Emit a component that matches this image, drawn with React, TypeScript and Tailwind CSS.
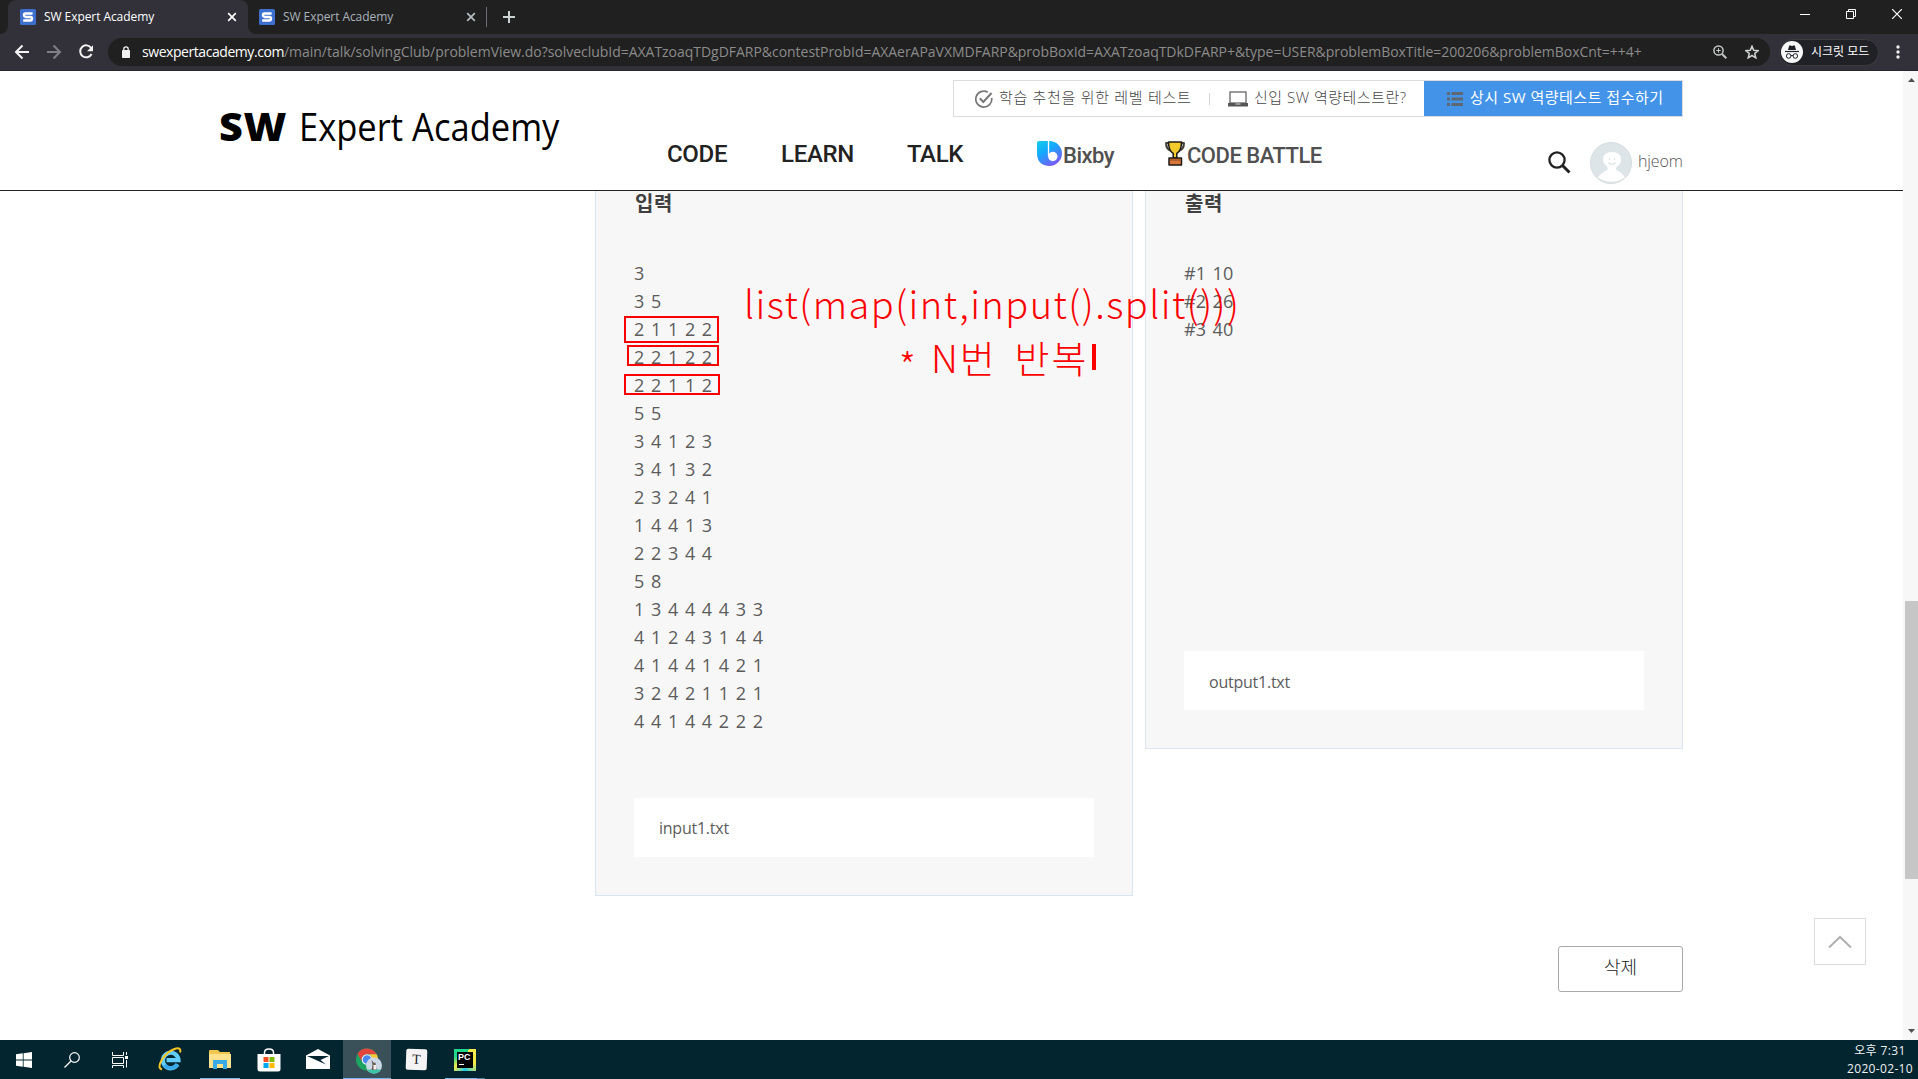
import type { ReactNode } from "react";

const UI = "font-['Open_Sans','Noto_Sans_CJK_KR',sans-serif]";

const inputLines = [
  "3", "3 5", "2 1 1 2 2", "2 2 1 2 2", "2 2 1 1 2", "5 5", "3 4 1 2 3", "3 4 1 3 2", "2 3 2 4 1",
  "1 4 4 1 3", "2 2 3 4 4", "5 8", "1 3 4 4 4 4 3 3", "4 1 2 4 3 1 4 4", "4 1 4 4 1 4 2 1",
  "3 2 4 2 1 1 2 1", "4 4 1 4 4 2 2 2",
];
const outputLines = ["#1 10", "#2 26", "#3 40"];

function Favicon() {
  return (
    <svg width="16" height="16" viewBox="0 0 16 16" className="shrink-0">
      <rect width="16" height="16" rx="1.5" fill="#3d6fcf" />
      <path d="M12.6 4.4H5.4Q4 4.4 4 6T5.4 7.9H10.6Q12 7.9 12 9.6T10.6 11.6H3.2" fill="none" stroke="#fff" strokeWidth="2.5" />
    </svg>
  );
}

function CloseX({ color }: { color: string }) {
  return (
    <svg width="10" height="10" viewBox="0 0 10 10" className="shrink-0">
      <path d="M1.2 1.2 8.8 8.8M8.8 1.2 1.2 8.8" stroke={color} strokeWidth="1.7" fill="none" />
    </svg>
  );
}

function TabStrip() {
  return (
    <div className="flex h-[34px] shrink-0 bg-[#202020]">
      <div className="flex w-2 items-end bg-[#323139]">
        <div className="h-full w-full rounded-br-lg bg-[#202020]" />
      </div>
      <div className="flex w-[240px] bg-[#202020]">
        <div className="flex w-full items-center rounded-t-lg bg-[#323139] pl-3 pr-[11px]">
          <Favicon />
          <span className="ml-2 grow whitespace-nowrap text-[12px] tracking-[-0.07px] text-white">SW Expert Academy</span>
          <CloseX color="#ffffff" />
        </div>
      </div>
      <div className="flex grow bg-[#323139]">
        <div className="flex grow items-center rounded-bl-lg bg-[#202020] pl-[11px]">
          <Favicon />
          <span className="ml-2 w-[183px] shrink-0 whitespace-nowrap text-[12px] tracking-[-0.07px] text-[#a9b3bb]">SW Expert Academy</span>
          <CloseX color="#b5bcc0" />
          <div className="ml-[10px] h-5 w-px shrink-0 bg-[#6c6d72]" />
          <svg width="12" height="12" viewBox="0 0 12 12" className="ml-[16px] shrink-0">
            <path d="M6 0V12M0 6H12" stroke="#ccd3d3" strokeWidth="2" />
          </svg>
          <div className="grow" />
          <div className="mb-[6px] flex items-center gap-9 pr-4">
            <svg width="10" height="10"><path d="M0 5.5H10" stroke="#fff" /></svg>
            <svg width="10" height="10" fill="none" stroke="#fff"><path d="M.5 2.5H7.5V9.5H.5ZM2.5 2.5V.5H9.5V7.5H7.5" /></svg>
            <svg width="10" height="10"><path d="M0 0 10 10M10 0 0 10" stroke="#fff" strokeWidth="1.2" /></svg>
          </div>
        </div>
      </div>
    </div>
  );
}

function Toolbar() {
  return (
    <div className="flex h-[37px] shrink-0 items-center border-b border-[#28272c] bg-[#323139] pr-[18px]">
      <svg width="108" height="28" viewBox="0 0 108 28" fill="none" strokeWidth="2" className="shrink-0">
        <path d="M29 14H16.5M22.5 7.5 16 14 22.5 20.5" stroke="#f4f4f4" />
        <path d="M47 14H59.5M53.5 7.5 60 14 53.5 20.5" stroke="#807f85" />
        <path d="M91.2 10A6 6 0 1 0 91.6 16" stroke="#f4f4f4" />
        <path d="M93 7.3V13.3H87Z" fill="#f4f4f4" />
      </svg>
      <div className="flex h-7 w-[1662px] shrink-0 items-center rounded-full bg-[#202020] pl-[14px] pr-[11px]">
        <svg width="8" height="12" viewBox="0 0 8 12" className="shrink-0">
          <rect y="4" width="8" height="8" rx=".8" fill="#f1f1f1" />
          <path d="M1.8 5V3A2.2 2.2 0 0 1 6.2 3V5" fill="none" stroke="#f1f1f1" strokeWidth="1.3" />
        </svg>
        <span className="mb-[2px] ml-3 w-[142px] shrink-0 whitespace-nowrap text-[14px] tracking-[-0.44px] text-white">swexpertacademy.com</span>
        <span className="mb-[2px] whitespace-nowrap text-[14px] tracking-[-0.03px] text-[#8b8b8b]">
          /main/talk/solvingClub/problemView.do?solveclubId=AXATzoaqTDgDFARP&amp;contestProbId=AXAerAPaVXMDFARP&amp;probBoxId=AXATzoaqTDkDFARP+&amp;type=USER&amp;problemBoxTitle=200206&amp;problemBoxCnt=++4+
        </span>
        <div className="grow" />
        <svg width="14" height="14" viewBox="0 0 14 14" fill="none" stroke="#c3c6c6" className="shrink-0">
          <circle cx="5.5" cy="5.5" r="4.6" strokeWidth="1.5" />
          <path d="M9 9 13.3 13.3" strokeWidth="2" />
          <path d="M5.5 3.3V7.7M3.3 5.5H7.7" strokeWidth="1.1" />
        </svg>
        <svg width="14" height="14" viewBox="0 0 24 24" fill="none" stroke="#cfd2d2" strokeWidth="2.6" className="ml-[18px] shrink-0">
          <path d="M12 2 14.9 9.1 22.5 9.7 16.7 14.6 18.5 22 12 18 5.5 22 7.3 14.6 1.5 9.7 9.1 9.1Z" />
        </svg>
      </div>
      <div className="ml-[9px] flex h-[27px] w-[100px] shrink-0 items-center rounded-full border border-[#3c3c41] bg-[#202027] pl-[1px]">
        <svg width="22" height="22" viewBox="0 0 22 22" className="shrink-0">
          <circle cx="11" cy="11" r="11" fill="#f7f8f8" />
          <path d="M7 9 8.2 4.5H9.4Q11 5.3 12.6 4.5H13.8L15 9Z" fill="#202027" />
          <path d="M4 10.5H18" stroke="#202027" strokeWidth="1.2" />
          <g fill="none" stroke="#202027"><circle cx="7.7" cy="15" r="2.3" /><circle cx="14.3" cy="15" r="2.3" /><path d="M10 14.7Q11 14 12 14.7" /></g>
        </svg>
        <span className="ml-[8px] whitespace-nowrap text-[12px] leading-none text-white">시크릿 모드</span>
      </div>
      <svg width="4" height="14" viewBox="0 0 4 14" fill="#eee" className="ml-[17px] shrink-0">
        <circle cx="2" cy="2" r="1.7" /><circle cx="2" cy="7" r="1.7" /><circle cx="2" cy="12" r="1.7" />
      </svg>
    </div>
  );
}

function Bixby() {
  return (
    <svg width="25" height="25" viewBox="0 0 25 25" className="mt-px shrink-0">
      <defs>
        <linearGradient id="bx" x1="0" y1="0" x2=".6" y2="1">
          <stop offset="0" stopColor="#14cfe6" /><stop offset=".45" stopColor="#12a8ff" /><stop offset="1" stopColor="#7a5cf5" />
        </linearGradient>
      </defs>
      <path d="M2 0H12.5A12.3 12.3 0 0 1 12.5 25Q0 24.5 0 12V2Q0 0 2 0Z" fill="url(#bx)" />
      <path d="M11.5 0V15" stroke="#fff" strokeWidth="1.3" />
      <circle cx="15.8" cy="15.5" r="4.7" fill="#fff" />
    </svg>
  );
}

function Trophy() {
  return (
    <svg width="20" height="25" viewBox="0 0 20 25" className="mt-px shrink-0" stroke="#1e1a16" strokeWidth="1.5" strokeLinejoin="round">
      <path d="M4.5 2H1.2Q.8 8.2 6.5 10M15.5 2H18.8Q19.2 8.2 13.5 10" fill="none" stroke="#45403a" strokeWidth="2.2" />
      <path d="M3.5 1H16.5Q16.5 9.5 11.8 12.5V17H8.2V12.5Q3.5 9.5 3.5 1Z" fill="#f4cb2c" />
      <rect x="4" y="17" width="12.5" height="7" fill="#d9773a" />
      <path d="M5 19H15.5" stroke="#8c4a22" strokeWidth="1" />
    </svg>
  );
}

function SiteHeader() {
  return (
    <header className="flex h-[120px] w-[1903px] shrink-0 border-b border-[#222] bg-white pl-[219px]">
      <div className="mt-[28px] flex h-[54px] w-[448px] shrink-0 items-start text-black">
        <span className="w-[80px] origin-left scale-x-[1.06] whitespace-nowrap text-[39px] font-extrabold leading-[54px] tracking-[0.5px]">SW</span>
        <span className="w-[300px] origin-left scale-x-[0.885] whitespace-nowrap text-[39px] leading-[54px]">Expert Academy</span>
      </div>
      <div className="flex w-[1016px] shrink-0 flex-col">
        <div className="ml-[286px] mt-[9px] flex h-[37px] w-[730px] shrink-0 items-center border border-[#dcdcdc] text-[15px] font-light text-[#444]">
          <svg width="18" height="18" viewBox="0 0 18 18" fill="none" stroke="#777" className="ml-[21px] shrink-0">
            <path d="M12.8 2.2A8 8 0 1 0 16.7 8" strokeWidth="1.7" />
            <path d="M4.8 8.3 8.3 12 16.5 3" strokeWidth="2" />
          </svg>
          <span className="mb-[2px] ml-[6px] w-[210px] shrink-0 whitespace-nowrap tracking-[0.7px]">학습 추천을 위한 레벨 테스트</span>
          <div className="h-3 w-px shrink-0 bg-[#d4d4d4]" />
          <svg width="20" height="16" viewBox="0 0 20 16" className="ml-[18px] shrink-0">
            <rect x="2" y="1" width="16" height="11" fill="none" stroke="#666" strokeWidth="1.3" />
            <path d="M0 12H20V15.5H0Z" fill="#555" /><path d="M7.5 12.5H12.5V13.5H7.5Z" fill="#ddd" />
          </svg>
          <span className="mb-[2px] ml-[6px] w-[170px] shrink-0 whitespace-nowrap tracking-[0.5px]">신입 SW 역량테스트란?</span>
          <div className="flex h-[35px] grow items-center bg-[#4394e8] font-normal text-white">
            <svg width="16" height="14" viewBox="0 0 16 14" fill="#5f6872" className="ml-[23px] shrink-0">
              <path d="M0 0H3V3H0ZM4.5 0H16V3H4.5ZM0 5.5H3V8.5H0ZM4.5 5.5H16V8.5H4.5ZM0 11H3V14H0ZM4.5 11H16V14H4.5Z" />
            </svg>
            <span className="mb-[2px] ml-[7px] whitespace-nowrap tracking-[0.5px]">상시 SW 역량테스트 접수하기</span>
          </div>
        </div>
        <div className="mt-[23px] flex h-[44px] w-[1016px] items-start font-['Roboto',sans-serif] text-[24px] font-medium leading-[28px] text-[#222]">
          <span className="w-[114px] shrink-0 tracking-[-0.3px]">CODE</span>
          <span className="w-[126px] shrink-0 tracking-[-0.3px]">LEARN</span>
          <span className="w-[130px] shrink-0 tracking-[-0.4px]">TALK</span>
          <Bixby />
          <span className="ml-[1px] mt-[2px] w-[102px] shrink-0 text-[22px] tracking-[-0.5px] text-[#505050]">Bixby</span>
          <Trophy />
          <span className="ml-[2px] mt-[2px] w-[361px] shrink-0 whitespace-nowrap text-[22px] tracking-[-0.5px] text-[#505050]">CODE BATTLE</span>
          <svg width="23" height="23" viewBox="0 0 23 23" fill="none" stroke="#222" className="mt-[11px] shrink-0">
            <circle cx="9" cy="9" r="7.6" strokeWidth="2.3" /><path d="M14.5 14.5 21.5 21.5" strokeWidth="3" />
          </svg>
          <svg width="42" height="42" viewBox="0 0 42 42" className="ml-[19px] mt-[2px] shrink-0">
            <circle cx="21" cy="21" r="20.5" fill="#dde5e8" stroke="#d5dde0" />
            <path d="M7.5 35.5Q13 29.5 17.5 28V25Q13 21.5 13 17.5 13 10 22 10 31 10 31 17.5 31 22 26 25.5V28Q31 29.5 35 35.5 22 44 7.5 35.5Z" fill="#fff" />
            <path d="M18.5 20.5Q22 24 25.5 20.5M19.5 16V18M24.5 16V18" fill="none" stroke="#dde5e8" strokeWidth="1.2" />
          </svg>
          <span className="ml-[6px] mt-[7px] font-['Open_Sans'] text-[16px] font-light tracking-[-0.1px] text-[#555]">hjeom</span>
        </div>
      </div>
    </header>
  );
}

function Panel({ title, lines, file, className, filePad, children }: { title: string; lines: string[]; file: string; className: string; filePad: string; children?: ReactNode }) {
  return (
    <section className={"relative flex w-[538px] shrink-0 flex-col border border-t-0 border-[#dbe4f0] bg-[#f7f7f7] pb-[38px] pl-[38px] pt-px " + className}>
      <h2 className="whitespace-nowrap pl-px text-[20px] font-bold leading-[24px] tracking-[0.5px] text-[#404040]">{title}</h2>
      <div className="mt-[43px] grow text-[18px] leading-[28px] text-[#5c5c5c] [word-spacing:2px]">
        {lines.map((l, i) => (
          <p key={i} className="whitespace-nowrap">{l}</p>
        ))}
      </div>
      <div className={"flex h-[59px] w-[460px] items-center bg-white pl-[25px] text-[16px] tracking-[-0.24px] text-[#5c5c5c] " + filePad}>{file}</div>
      {children}
    </section>
  );
}

function Taskbar() {
  return (
    <footer className="flex h-[39px] shrink-0 items-stretch bg-[#03252f]">
      <div className="flex w-[48px] items-center justify-center">
        <svg width="16" height="16" viewBox="0 0 16 16" fill="#fff"><path d="M0 2.2 6.8 1.3V7.6H0ZM7.6 1.2 16 0V7.6H7.6ZM0 8.4H6.8V14.7L0 13.8ZM7.6 8.4H16V16L7.6 14.8Z" /></svg>
      </div>
      <div className="flex w-[48px] items-center justify-center">
        <svg width="16" height="16" viewBox="0 0 16 16" fill="none" stroke="#fff" strokeWidth="1.2"><circle cx="10.5" cy="5.5" r="4.8" /><path d="M7 9 .5 15.5" /></svg>
      </div>
      <div className="flex w-[48px] items-center justify-center">
        <svg width="16" height="16" viewBox="0 0 16 16" fill="none" stroke="#fff"><path d="M.5 0V3.5H11.5V0M.5 5.5H11.5V11.5H.5ZM.5 16V13.5H11.5V16M14.5 0V3M14.5 8V15.5" /><path d="M13 4H16V7H13Z" fill="#fff" stroke="none" /></svg>
      </div>
      <div className="flex w-[52px] items-center justify-center">
        <svg width="24" height="24" viewBox="0 0 24 24" fill="none" className="mb-px">
          <path d="M19.5 17.3A7.8 7.8 0 1 1 20.5 13.2H8.5" stroke="#62cdfa" strokeWidth="4.2" />
          <path d="M19.5 17.5A8 8 0 0 1 6.5 18" stroke="#38a9ea" strokeWidth="3.5" />
          <path d="M4 22.5Q-1 21 4 12.5 10 3.5 18 1.5 23.5.5 22 5.5" stroke="#f5c526" strokeWidth="2" />
        </svg>
      </div>
      <div className="flex w-[48px] flex-col items-center justify-between pt-[10px]">
        <svg width="22" height="19" viewBox="0 0 22 19">
          <path d="M0 1Q0 0 1 0H9L11 2H21V18H0Z" fill="#f0c64e" /><path d="M0 4H22V18H0Z" fill="#fde18d" />
          <path d="M4 10H18V19H14V14H8V19H4Z" fill="#3ba9e4" />
        </svg>
        <div className="h-px w-10 bg-[#76b9ed]" />
      </div>
      <div className="flex w-[50px] items-center justify-center">
        <svg width="24" height="24" viewBox="0 0 24 24">
          <path d="M7.5 6V4.5Q7.5 1 12 1T16.5 4.5V6" fill="none" stroke="#fff" strokeWidth="1.5" />
          <path d="M.5 6H23.5V21Q23.5 23.5 21 23.5H3Q.5 23.5 .5 21Z" fill="#fff" />
          <path d="M6.5 9H11.5V14H6.5Z" fill="#f25022" /><path d="M12.5 9H17.5V14H12.5Z" fill="#7fba00" /><path d="M6.5 15H11.5V20H6.5Z" fill="#00a4ef" /><path d="M12.5 15H17.5V20H12.5Z" fill="#ffb900" />
        </svg>
      </div>
      <div className="flex w-[49px] items-center justify-center pb-px pr-[2px]">
        <svg width="24" height="20" viewBox="0 0 24 20"><path d="M0 6.5 12 0 24 6.5V20H0Z" fill="#fff" /><path d="M1 7H23L14.5 11 20 15.5Z" fill="#03252f" /></svg>
      </div>
      <div className="flex w-[48px] flex-col items-center justify-between bg-[#3b5159] pt-2">
        <svg width="26" height="26" viewBox="0 0 26 26" className="ml-[3px]">
          <circle cx="11" cy="11.5" r="11" fill="#1da362" />
          <path d="M1.5 6A11 11 0 0 1 20.6 6.2H11A5.3 5.3 0 0 0 6.3 14.1Z" fill="#e2453b" />
          <path d="M20.6 6.2A11 11 0 0 1 11 22.5L15.7 14Q17.5 9 13 6.2Z" fill="#fbc83a" />
          <circle cx="11" cy="11.5" r="5.3" fill="#f4f6f8" /><circle cx="11" cy="11.5" r="4.3" fill="#4a87ee" />
          <circle cx="18" cy="17.5" r="8" fill="#cdd8e6" /><path d="M11 21.5A8 8 0 0 0 25 21.5Z" fill="#3cc4a8" />
          <path d="M15.5 12 18 15 19.5 14.5 20.5 22H15.5L16.5 17Z" fill="#6b6154" /><path d="M17.5 17H20V21.5H17.5Z" fill="#f4f1ec" />
        </svg>
        <div className="h-px w-12 bg-[#76b9ed]" />
      </div>
      <div className="flex w-[50px] items-center justify-center">
        <div className="flex h-[21px] w-[21px] rotate-2 items-center justify-center rounded-[2px] bg-[#f4f4f4] font-['Liberation_Serif'] text-[14px] leading-none text-[#222]">T</div>
      </div>
      <div className="flex w-[44px] flex-col items-center justify-between pl-[4px] pt-[9px]">
        <div className="flex h-[22px] w-[22px] items-center justify-center bg-[conic-gradient(from_20deg,#f5ea4a,#f5ea4a_25%,#1fc8e8_45%,#f5ea4a_60%,#21d789_75%,#21d789)]">
          <div className="flex h-[16px] w-[16px] flex-col bg-black pl-[1px] pt-[1px] text-white">
            <span className="font-['Liberation_Sans'] text-[9px] font-bold leading-[8px]">PC</span>
            <div className="ml-[1px] mt-[3px] h-px w-[5px] shrink-0 bg-white" />
          </div>
        </div>
        <div className="flex h-px w-10"><div className="w-8 bg-[#76b9ed]" /><div className="w-2 bg-[#4c7f9f]" /></div>
      </div>
      <div className="grow" />
      <div className="flex w-[76px] flex-col items-center pt-px text-[12px] text-[#eef2f3]">
        <span className="whitespace-nowrap leading-[19px] tracking-[0.4px]">오후 7:31</span>
        <span className="leading-[17px] tracking-[0.34px]">2020-02-10</span>
      </div>
    </footer>
  );
}

export default function App() {
  return (
    <div className={"flex h-[1079px] w-[1918px] flex-col overflow-hidden bg-white " + UI}>
      <TabStrip />
      <Toolbar />
      <div className="flex h-[969px] shrink-0">
        <div className="flex w-[1903px] shrink-0 flex-col">
          <SiteHeader />
          <main className="flex h-[849px] flex-col bg-white">
            <div className="relative flex items-start gap-[12px] pl-[595px]">
              <Panel title="입력" lines={inputLines} file="input1.txt" filePad="pt-px" className="h-[705px]">
                {/* hand-drawn markers around the grid rows */}
                <div className="absolute left-[28px] top-[125px] h-[27px] w-[95px] border-2 border-[#fb0000]" />
                <div className="absolute left-[31px] top-[154px] h-[21px] w-[92px] border-2 border-[#fb0000]" />
                <div className="absolute left-[28px] top-[183px] h-[21px] w-[96px] border-2 border-[#fb0000]" />
              </Panel>
              <Panel title="출력" lines={outputLines} file="output1.txt" filePad="pt-[3px]" className="h-[558px]" />
              <div className="absolute left-[744px] top-[86px] w-[520px] whitespace-nowrap font-['Noto_Sans_CJK_KR',sans-serif] text-[38px] font-light leading-[52px] text-[#fb0000]">
                <p className="tracking-[1.44px]">list(map(int,input().split()))</p>
                <div className="flex items-center pl-[155px]">
                  <span className="w-[32px] pt-[16px] text-[38px] leading-[40px]">*</span>
                  <span className="text-[38px] tracking-[1.8px] [word-spacing:8px]">N번 반복</span>
                  <span className="mb-[1px] ml-[4px] h-[26px] w-[4px] bg-[#fb0000]" />
                </div>
              </div>
            </div>
            <div className="flex items-start pl-[1558px] pt-[22px]">
              <button className="mt-[28px] flex h-[46px] w-[125px] items-center justify-center rounded-[3px] border border-[#aaa] pb-[4px] text-[18px] font-light text-[#222]">삭제</button>
              <div className="ml-[131px] flex h-[47px] w-[52px] items-center justify-center border border-[#dcdcdc]">
                <svg width="24" height="14" viewBox="0 0 24 14" fill="none" stroke="#b0b0b0" strokeWidth="2"><path d="M1 12.5 12 2 23 12.5" /></svg>
              </div>
            </div>
          </main>
        </div>
        <div className="flex w-[15px] flex-col items-end bg-[#f7f7f7]">
          <svg width="13" height="530" viewBox="0 0 13 530"><path d="M3 11 6.5 7 10 11Z" fill="#505050" /></svg>
          <div className="h-[278px] w-[13px] bg-[#c6c6c6]" />
          <svg width="13" height="161" viewBox="0 0 13 161"><path d="M3 150 6.5 154 10 150Z" fill="#505050" /></svg>
        </div>
      </div>
      <Taskbar />
    </div>
  );
}
